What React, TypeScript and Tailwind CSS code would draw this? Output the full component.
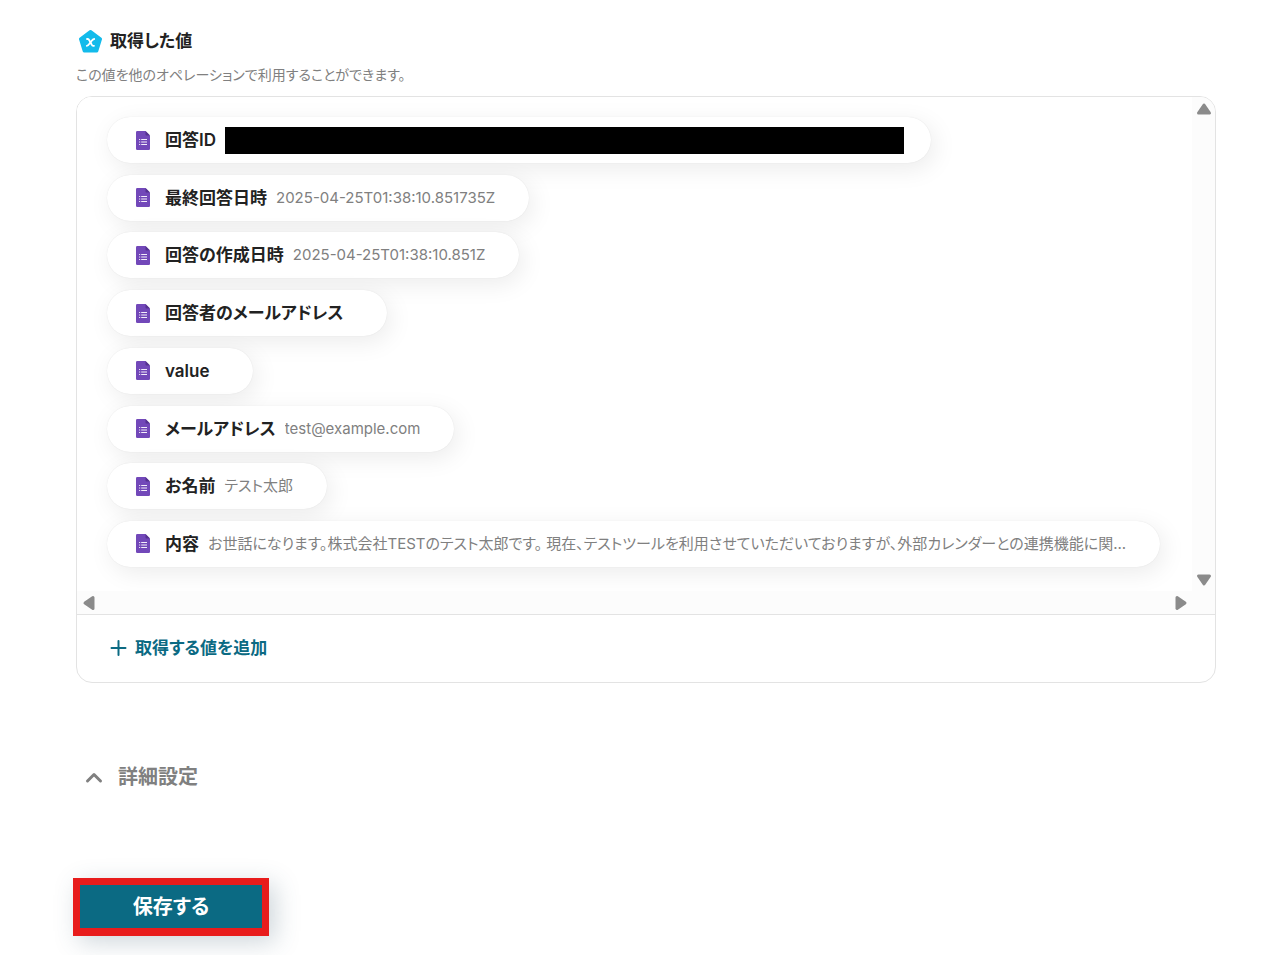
import React from 'react';

type Item = {
  label: string;
  value?: string;
  redacted?: boolean;
};

const items: Item[] = [
  { label: '回答ID', redacted: true },
  { label: '最終回答日時', value: '2025-04-25T01:38:10.851735Z' },
  { label: '回答の作成日時', value: '2025-04-25T01:38:10.851Z' },
  { label: '回答者のメールアドレス' },
  { label: 'value' },
  { label: 'メールアドレス', value: 'test@example.com' },
  { label: 'お名前', value: 'テスト太郎' },
  {
    label: '内容',
    value:
      'お世話になります。株式会社TESTのテスト太郎です。 現在、テストツールを利用させていただいておりますが、外部カレンダーとの連携機能に関...',
  },
];

function PentagonIcon() {
  return (
    <svg viewBox="0 0 24 24" className="h-6 w-6 shrink-0" aria-hidden="true">
      <path
        d="M12.5 2.5 L22.5 10 L18.8 22 H6.2 L2.5 10 Z"
        fill="#13bbeb"
        stroke="#13bbeb"
        strokeWidth="3"
        strokeLinejoin="round"
      />
      <path
        d="M9 10 H9.8 C10.6 10 10.9 10.5 11.4 11.5 L13.6 15.5 C14 16.4 14.4 16.8 15.2 16.8 H16"
        fill="none"
        stroke="#fff"
        strokeWidth="1.8"
        strokeLinecap="round"
      />
      <path
        d="M16.2 10 C14.6 10 14 11.4 12.5 13.4 C11 15.6 10.4 16.8 8.8 16.8"
        fill="none"
        stroke="#fff"
        strokeWidth="1.8"
        strokeLinecap="round"
      />
    </svg>
  );
}

function FormIcon() {
  return (
    <svg viewBox="0 0 14 19" className="h-[19px] w-[14px] shrink-0" aria-hidden="true">
      <path d="M1.3 0 H9.5 L14 4.5 V17.7 Q14 19 12.7 19 H1.3 Q0 19 0 17.7 V1.3 Q0 0 1.3 0 Z" fill="#7248b9" />
      <path d="M9.5 0 L14 4.5 H10.3 Q9.5 4.5 9.5 3.7 Z" fill="#54318f" />
      <path
        d="M5.2 8.5 H11 M5.2 11 H11 M5.2 13.5 H11 M3.1 8.5 H4.2 M3.1 11 H4.2 M3.1 13.5 H4.2"
        stroke="#f3eefa"
        strokeWidth="1"
      />
    </svg>
  );
}

function ScrollArrow({ label, rotate }: { label: string; rotate: string }) {
  return (
    <button type="button" aria-label={label} className="flex h-[23px] w-[23px] items-center justify-center">
      <svg viewBox="0 0 16 16" className={`h-4 w-4 ${rotate}`} aria-hidden="true">
        <path d="M8 4 L13.5 12 H2.5 Z" fill="#8b8b8b" stroke="#8b8b8b" strokeWidth="3" strokeLinejoin="round" />
      </svg>
    </button>
  );
}

function ValuePill({ item }: { item: Item }) {
  return (
    <li
      className={`flex h-[46px] max-w-full items-center rounded-full bg-white pl-[29px] shadow-[4px_6px_24px_rgba(0,0,0,0.08),0_0_1px_rgba(0,0,0,0.12)] ${
        item.redacted ? 'pr-[27px]' : 'pr-[34px]'
      }`}
    >
      <FormIcon />
      <span className="ml-[15px] whitespace-nowrap text-[17px] leading-6 font-semibold text-[#222]">{item.label}</span>
      {item.redacted ? (
        <span className="ml-[9px] h-[27px] w-[679px] bg-black" />
      ) : (
        <span className="ml-[9px] truncate text-[15px] leading-6 text-[#808080]">{item.value}</span>
      )}
    </li>
  );
}

export default function App() {
  return (
    <main className="min-h-screen bg-white pt-[29px] pr-[45px] pl-[76px] font-['Inter','Noto_Sans_CJK_JP',sans-serif] [font-feature-settings:'palt']">
      {/* Heading */}
      <header>
        <div className="flex items-center gap-2 pl-[2px]">
          <PentagonIcon />
          <h1 className="text-[17px] leading-6 font-semibold text-[#222]">取得した値</h1>
        </div>
        <p className="mt-3 text-[14px] leading-5 text-[#808080]">この値を他のオペレーションで利用することができます。</p>
      </header>

      {/* Values */}
      <section className="mt-[11px] overflow-hidden rounded-2xl border border-[#e3e3e3]">
        <div className="grid grid-cols-[minmax(0,1fr)_23px] border-b border-[#e3e3e3] bg-[#fcfcfc]">
          <div className="overflow-hidden bg-white px-[30px] pt-5 pb-6">
            <ul className="flex h-[450px] flex-col items-start justify-between">
              {items.map((item) => (
                <ValuePill key={item.label} item={item} />
              ))}
            </ul>
          </div>
          <div className="flex flex-col justify-between">
            <ScrollArrow label="上へスクロール" rotate="rotate-0" />
            <ScrollArrow label="下へスクロール" rotate="rotate-180" />
          </div>
          <div className="flex justify-between">
            <ScrollArrow label="左へスクロール" rotate="-rotate-90" />
            <ScrollArrow label="右へスクロール" rotate="rotate-90" />
          </div>
        </div>
        <div className="px-8 pt-[21px] pb-[22px]">
          <button type="button" className="flex items-center gap-2 text-[17px] leading-6 font-semibold text-[#0b6a83]">
            <svg viewBox="0 0 18 18" className="h-[18px] w-[18px]" aria-hidden="true">
              <path d="M9.5 2 V16 M2.5 9 H16.5" stroke="currentColor" strokeWidth="2" strokeLinecap="round" />
            </svg>
            取得する値を追加
          </button>
        </div>
      </section>

      {/* Advanced settings */}
      <button
        type="button"
        aria-expanded="true"
        className="mt-20 flex items-center gap-[15px] pl-[9px] text-xl leading-7 font-bold text-[#808080]"
      >
        <svg viewBox="0 0 18 18" className="h-[18px] w-[18px]" aria-hidden="true">
          <path
            d="M2.5 13 L9 6.5 L15.5 13"
            fill="none"
            stroke="currentColor"
            strokeWidth="3"
            strokeLinecap="round"
            strokeLinejoin="round"
          />
        </svg>
        詳細設定
      </button>

      <button
        type="button"
        className="mt-[87px] -ml-[3px] h-[58px] w-[196px] border-[7px] border-b-8 border-[#e81c1c] bg-[#0b6a83] text-xl leading-7 font-bold text-white shadow-[6px_6px_24px_rgba(60,90,110,0.25)]"
      >
        保存する
      </button>
    </main>
  );
}
